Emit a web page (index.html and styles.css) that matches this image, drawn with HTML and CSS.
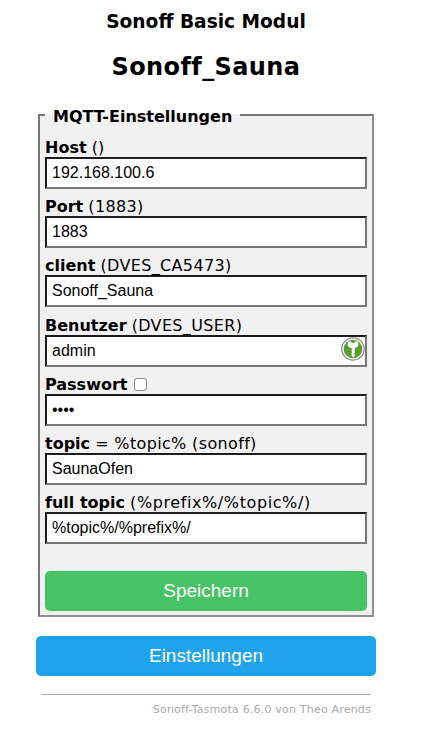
FILE: index.html
```html
<!DOCTYPE html>
<html lang="de">
<head>
<meta charset="utf-8">
<title>Sonoff_Sauna</title>
<link rel="stylesheet" href="styles.css">
</head>
<body>
<main class="page">
  <header class="head">
    <h3 class="module">Sonoff Basic Modul</h3>
    <h2 class="device">Sonoff_Sauna</h2>
  </header>
  <fieldset class="panel">
    <legend class="legend">MQTT-Einstellungen</legend>
    <form class="form">
      <label class="field"><span class="label"><b>Host</b> ()</span><input class="input" value="192.168.100.6"></label>
      <label class="field"><span class="label"><b>Port</b> <span class="hint">(1883)</span></span><input class="input" value="1883"></label>
      <label class="field"><span class="label"><b>client</b> <span class="hint">(DVES_CA5473)</span></span><input class="input" value="Sonoff_Sauna"></label>
      <label class="field"><span class="label"><b>Benutzer</b> <span class="hint">(DVES_USER)</span></span>
        <span class="keyed"><input class="input" value="admin">
          <svg class="key" viewBox="0 0 24 24" aria-hidden="true">
            <circle cx="12" cy="12" r="11.2" fill="#fff" stroke="#8a8a8a" stroke-width="1.2"/>
            <circle cx="12" cy="12" r="9.300" fill="#5a9e2f"/>
            <path d="M7.500 4.500h2.300l1.200 1.600h2l1.200-1.600h2.300l1 2.800c0 2-1.400 3.300-3.500 3.700v2.200l-1 .6 1 .7v1.200l-1 .7 1 .7v1.500l-1.700 2.200-1.600-1.800V11C7.900 10.600 6.500 9.300 6.500 7.300z" fill="#fff"/>
          </svg>
        </span></label>
      <label class="field"><span class="label"><b>Passwort</b> <input class="check" type="checkbox"></span><input class="input" type="password" value="1234"></label>
      <label class="field"><span class="label"><b>topic</b> <span class="hint">= %topic% (sonoff)</span></span><input class="input" value="SaunaOfen"></label>
      <label class="field"><span class="label"><b>full topic</b> <span class="hint wide">(%prefix%/%topic%/)</span></span><input class="input" value="%topic%/%prefix%/"></label>
      <button class="btn save" type="button">Speichern</button>
    </form>
  </fieldset>
  <button class="btn config" type="button">Einstellungen</button>
  <footer class="foot">Sonoff-Tasmota 6.6.0 von Theo Arends</footer>
</main>
</body>
</html>
```
FILE: styles.css
```css
html, body { margin: 0; padding: 0; background: #fff; }
body { font-family: "DejaVu Sans", Verdana, sans-serif; font-size: 16px; color: #000; }
.page { width: 340px; margin-left: 36px; display: flex; flex-direction: column; }
.head { text-align: center; }
.module { margin: 11px 0 0; font-size: 18.6px; line-height: 21px; font-weight: bold; }
.device { margin: 21px 0 0; font-size: 24px; letter-spacing: 0.4px; line-height: 29px; font-weight: bold; }
.panel { margin: 21px 2px 0; padding: 0 5px 0; border: 2px solid; border-color: #767676 #8e8e8e #8e8e8e #767676; background: #f1f1f1; min-width: 0; }
.legend { margin: 0; padding: 4px 8px 0; font-weight: bold; font-size: 16px; line-height: 19px; }
.form { display: flex; flex-direction: column; padding-top: 13px; padding-bottom: 4px; }
.field { display: block; margin-bottom: 9.2px; }
.label { display: block; font-size: 16px; line-height: 18px; height: 18px; white-space: nowrap; }
.hint { letter-spacing: 0.35px; }
.wide { letter-spacing: 0.6px; }
.input { display: block; box-sizing: border-box; width: 322px; height: 32px; padding: 1px 5px; border: 2px solid; border-color: #1d1d1d #767676 #767676 #1d1d1d; background: #fff; font-family: "Liberation Sans", Arial, sans-serif; font-size: 16px; color: #000; outline: 0; border-radius: 0; }
.keyed { display: block; position: relative; }
.key { position: absolute; right: 2px; top: 2px; width: 24px; height: 24px; }
.check { appearance: none; box-sizing: border-box; width: 13px; height: 13px; margin: 0 0 0 1px; vertical-align: -1px; background: #fff; border: 1px solid #8a8a8a; border-radius: 3px; }
.btn { display: block; border: 0; border-radius: 5px; height: 40px; color: #fff; font-family: "Liberation Sans", Arial, sans-serif; font-size: 19px; padding: 0; }
.save { width: 322px; margin-top: 18px; background: #47c266; }
.config { width: 340px; margin-top: 19px; background: #1fa3ec; }
.foot { margin: 18px 5px 0; padding-top: 6px; border-top: 1px solid #aaa; text-align: right; font-size: 11px; letter-spacing: 0.2px; line-height: 17px; color: #aaa; }
```
